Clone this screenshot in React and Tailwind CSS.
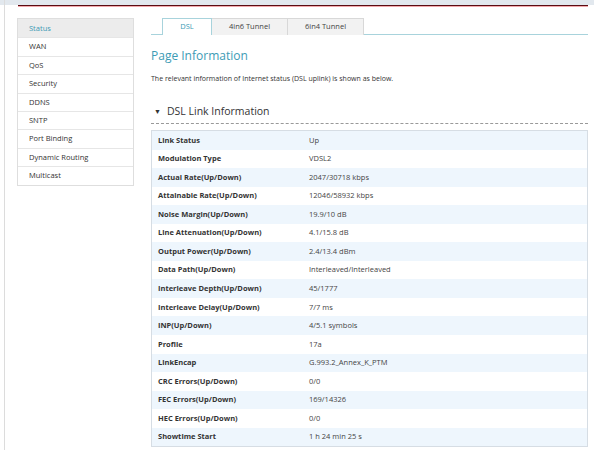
// App.jsx

const menuItems = [
  "Status",
  "WAN",
  "QoS",
  "Security",
  "DDNS",
  "SNTP",
  "Port Binding",
  "Dynamic Routing",
  "Multicast",
];

const rows = [
  ["Link Status", "Up"],
  ["Modulation Type", "VDSL2"],
  ["Actual Rate(Up/Down)", "2047/30718 kbps"],
  ["Attainable Rate(Up/Down)", "12046/58932 kbps"],
  ["Noise Margin(Up/Down)", "19.9/10 dB"],
  ["Line Attenuation(Up/Down)", "4.1/15.8 dB"],
  ["Output Power(Up/Down)", "2.4/13.4 dBm"],
  ["Data Path(Up/Down)", "Interleaved/Interleaved"],
  ["Interleave Depth(Up/Down)", "45/1777"],
  ["Interleave Delay(Up/Down)", "7/7 ms"],
  ["INP(Up/Down)", "4/5.1 symbols"],
  ["Profile", "17a"],
  ["LinkEncap", "G.993.2_Annex_K_PTM"],
  ["CRC Errors(Up/Down)", "0/0"],
  ["FEC Errors(Up/Down)", "169/14326"],
  ["HEC Errors(Up/Down)", "0/0"],
  ["Showtime Start", "1 h 24 min 25 s"],
];

const tabs = ["DSL", "4in6 Tunnel", "6in4 Tunnel"];

const App = () => {
  return (
    <div
      className="relative w-[594px] h-[450px] overflow-hidden bg-white text-[#333]"
      style={{ fontFamily: '"Open Sans", "Noto Sans", sans-serif' }}
    >
      {/* TOP STRIP */}
      <div className="h-[5px] bg-[#e2e8ee]" />
      <div className="ml-[18px] mr-[6px] h-[1px] bg-[#5a0c12]" />
      <div className="ml-[18px] mr-[6px] h-[1px] bg-[#f2a8ac]" />

      {/* LEFT FRAME LINE */}
      <div className="absolute left-[4px] top-0 bottom-0 w-[1px] bg-[#dcdcdc]" />

      <div className="flex pl-[17px] pt-[11px]">
        {/* SIDEBAR */}
        <div className="w-[117px] shrink-0 border border-[#dedede] bg-white self-start">
          {menuItems.map((item, i) => (
            <div
              key={item}
              className={`h-[18.4px] flex items-center pl-[11px] text-[7.5px] ${
                i > 0 ? "border-t border-[#e6e6e6]" : ""
              } ${i === 0 ? "bg-[#ececec] text-[#3d9bb5]" : "text-[#333]"}`}
            >
              {item}
            </div>
          ))}
        </div>

        {/* CONTENT */}
        <div className="ml-[17px] w-[437px] shrink-0">
          {/* TABS */}
          <div className="flex pl-[11px] border-b border-[#a8d3dc] h-[17px]">
            {tabs.map((t, i) => (
              <div
                key={t}
                className={`h-[17px] flex items-center justify-center text-[7.5px] ${
                  i === 0
                    ? "w-[50px] bg-white border border-b-0 border-[#a8d3dc] text-[#3d9bb5] h-[17px] mb-[-1px] relative"
                    : "w-[76px] bg-[#f2f2f2] border-t border-r border-[#d8d8d8] text-[#444]"
                }`}
              >
                {t}
              </div>
            ))}
          </div>

          <h1 className="mt-[12px] text-[12px] leading-[18px] text-[#3d9bb5]">
            Page Information
          </h1>

          <p className="mt-[9px] text-[7px] leading-[10px] text-[#333]">
            The relevant information of Internet status (DSL uplink) is shown as below.
          </p>

          {/* SECTION HEADER */}
          <div className="mt-[20px] flex items-center h-[16px] pl-[3px]">
            <span className="text-[7px] text-[#333]">▼</span>
            <span className="ml-[6px] text-[10.5px] text-[#333]">DSL Link Information</span>
          </div>
          <div className="mt-[3px] border-t border-dashed border-[#999]" />

          {/* TABLE */}
          <div className="mt-[6px] border border-[#d6dde4]">
            {rows.map(([label, value], i) => (
              <div
                key={label}
                className={`flex items-center h-[18.55px] text-[7.5px] ${
                  i % 2 === 0 ? "bg-[#eef6fd]" : "bg-white"
                }`}
              >
                <div className="w-[157px] pl-[6px] font-bold text-[#333]">{label}</div>
                <div className="text-[#444]">{value}</div>
              </div>
            ))}
          </div>
        </div>
      </div>
    </div>
  );
};

export default App;
